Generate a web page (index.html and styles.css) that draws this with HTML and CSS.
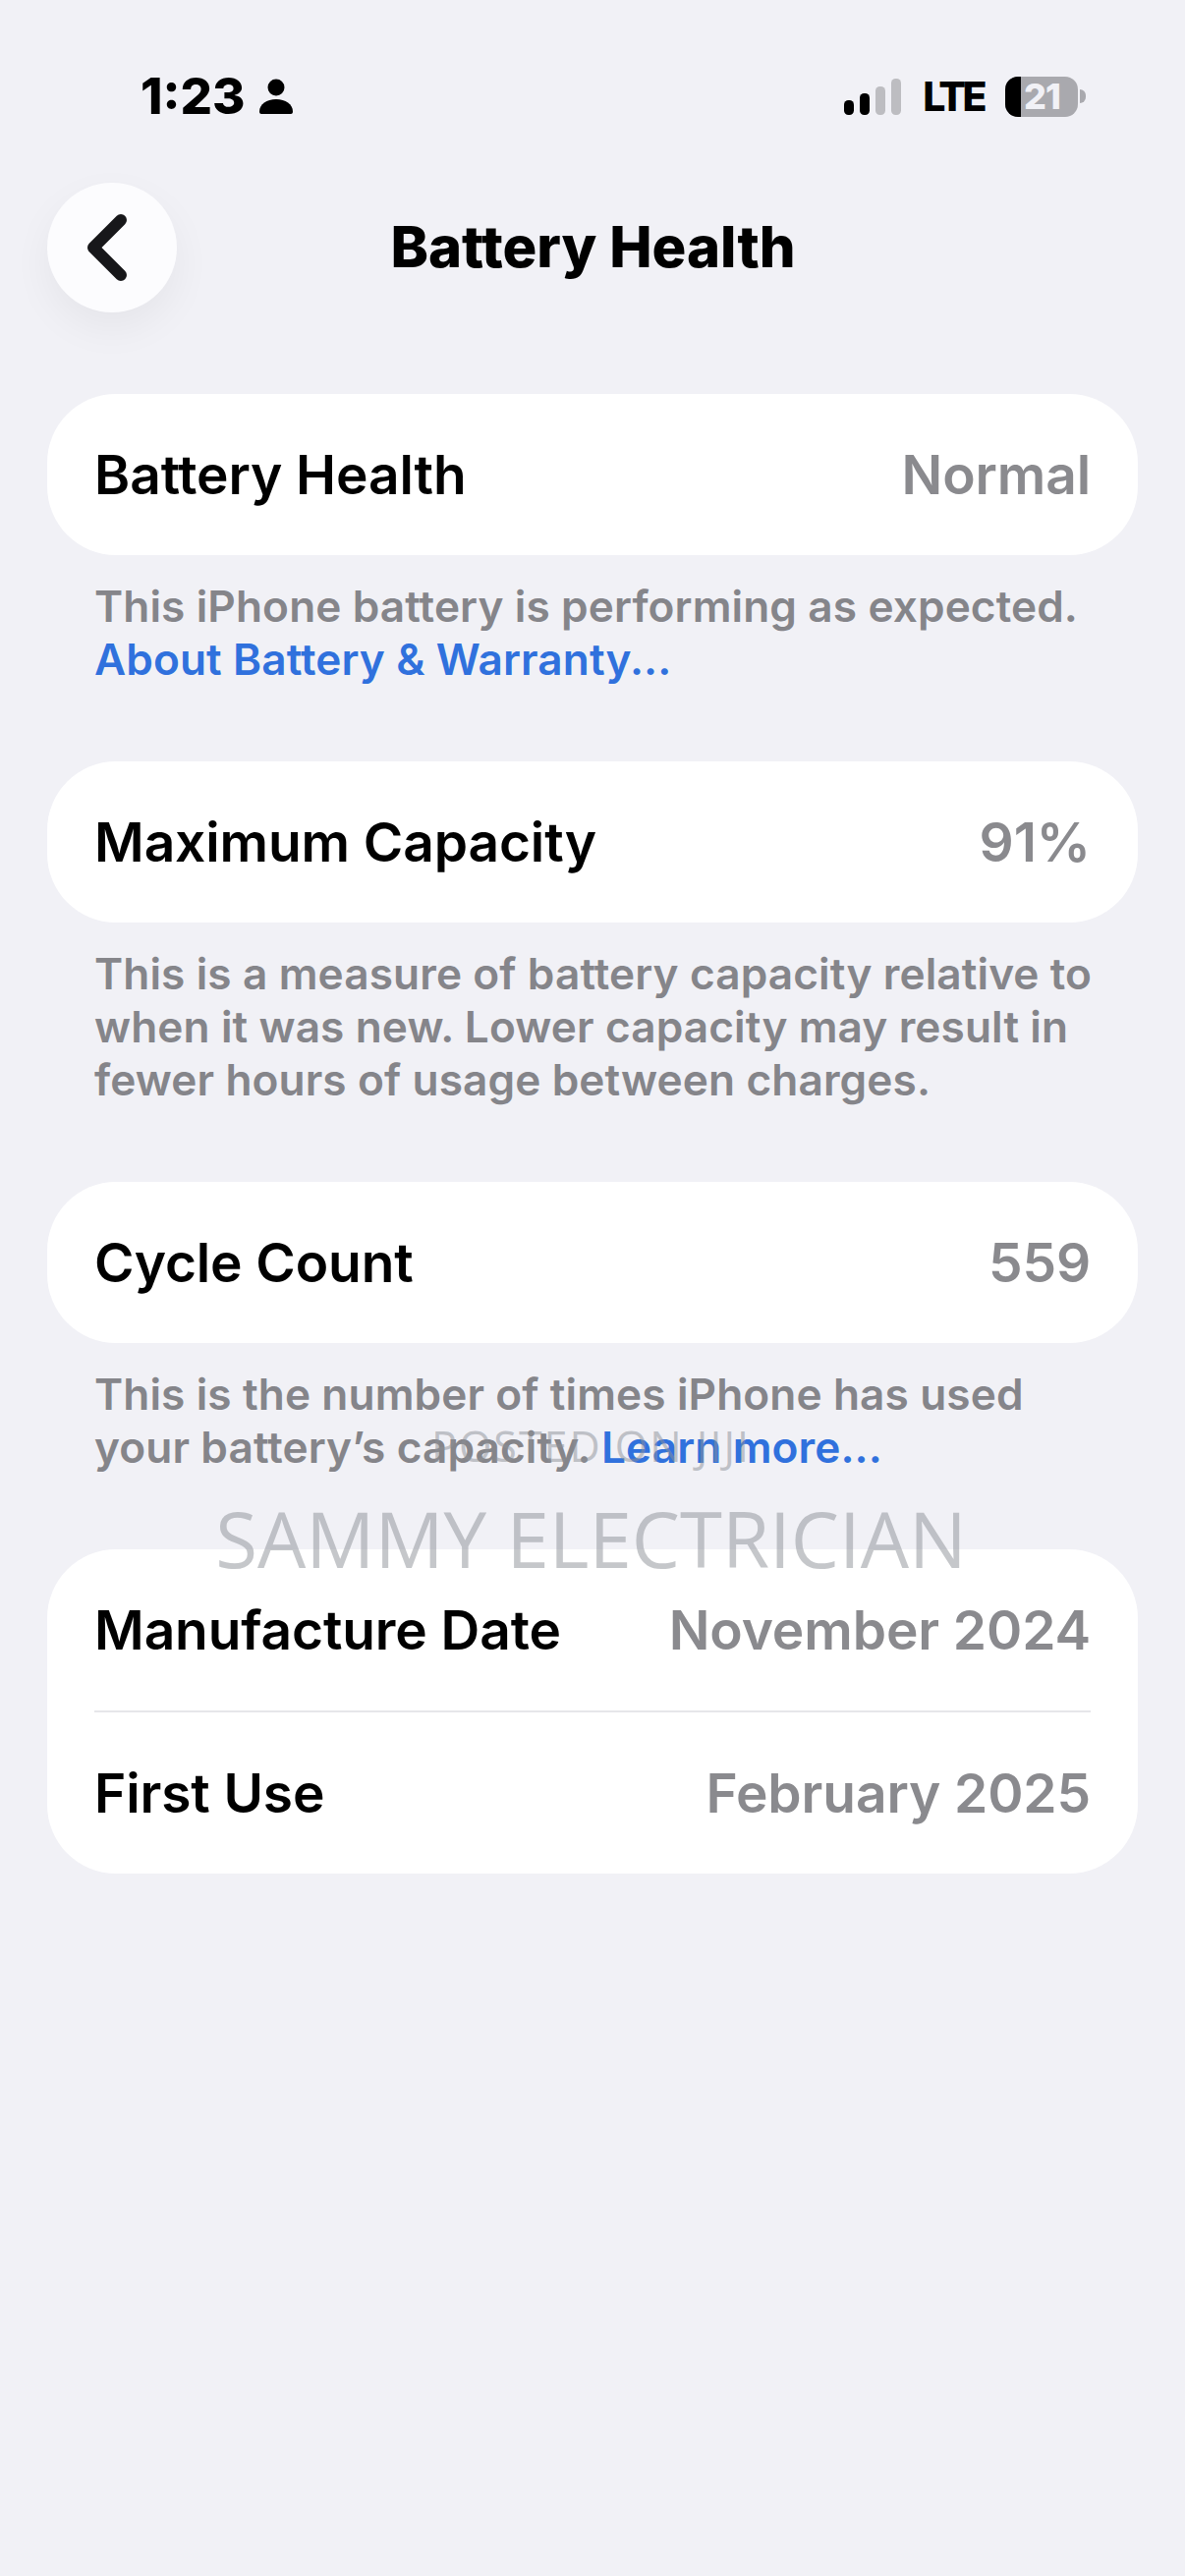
FILE: index.html
```html
<!DOCTYPE html>
<html lang="en">
<head>
    <meta charset="UTF-8">
    <title>Battery Health</title>
    <link rel="stylesheet" href="styles.css">
</head>
<body>

<div class="screen">
    <div class="status-bar">
        <div class="status-left">
            <span class="time">1:23</span>
            <svg class="person" width="34" height="36" viewBox="0 0 34 36">
                <circle cx="17" cy="9" r="8.500"/>
                <path d="M2 36c-1.500 0-2-1-2-2.500C0 26 7.500 21 17 21s17 5 17 12.500c0 1.500-.5 2.500-2 2.500z"/>
            </svg>
        </div>
        <div class="status-right">
            <svg class="signal" width="58" height="37" viewBox="0 0 58 37">
                <rect x="0" y="22" width="10" height="15" rx="4.500" fill="#000"/>
                <rect x="16" y="15" width="10" height="22" rx="4.500" fill="#000"/>
                <rect x="32" y="8" width="10" height="29" rx="4.500" fill="#bdbdc1"/>
                <rect x="48" y="0" width="10" height="37" rx="4.500" fill="#bdbdc1"/>
            </svg>
            <span class="lte">LTE</span>
            <div class="battery">
                <div class="battery-body">
                    <div class="battery-fill"></div>
                    <span class="battery-num">21</span>
                </div>
                <div class="battery-cap"></div>
            </div>
        </div>
    </div>

    <div class="nav">
        <div class="back">
            <svg width="42" height="68" viewBox="0 0 42 68">
                <path d="M35 6 7 34l28 28" fill="none" stroke="#17171a" stroke-width="12" stroke-linecap="round" stroke-linejoin="round"/>
            </svg>
        </div>
        <h1 class="title">Battery Health</h1>
    </div>

    <div class="group">
        <div class="card">
            <div class="row"><span>Battery Health</span><span class="value">Normal</span></div>
        </div>
        <p class="note">This iPhone battery is performing as expected.<br><a class="link">About Battery &amp; Warranty...</a></p>
    </div>

    <div class="group">
        <div class="card">
            <div class="row"><span>Maximum Capacity</span><span class="value">91%</span></div>
        </div>
        <p class="note">This is a measure of battery capacity relative to<br>when it was new. Lower capacity may result in<br>fewer hours of usage between charges.</p>
    </div>

    <div class="group">
        <div class="card">
            <div class="row"><span>Cycle Count</span><span class="value">559</span></div>
        </div>
        <p class="note">This is the number of times iPhone has used<br>your battery’s capacity. <a class="link">Learn more...</a></p>
    </div>

    <div class="group">
        <div class="card">
            <div class="row"><span>Manufacture Date</span><span class="value">November 2024</span></div>
            <div class="divider"></div>
            <div class="row"><span>First Use</span><span class="value">February 2025</span></div>
        </div>
    </div>

    <div class="watermark">
        <div class="wm-small">POSTED ON JIJI</div>
        <div class="wm-big">SAMMY ELECTRICIAN</div>
    </div>
</div>

</body>
</html>
```

FILE: styles.css
```css
* {
    box-sizing: border-box;
}
body {
    margin: 0;
    background-color: #f1f1f6;
    font-family: Inter, "Liberation Sans", sans-serif;
    color: #000;
}
.screen {
    position: relative;
    width: 1206px;
    height: 2622px;
    padding: 0 48px;
    overflow: hidden;
}
.status-bar {
    display: flex;
    justify-content: space-between;
    align-items: center;
    height: 154px;
    padding: 42px 53px 0 95px;
}
.status-left {
    display: flex;
    align-items: center;
    gap: 14px;
}
.time {
    font-size: 51px;
    font-weight: 800;
    line-height: 50px;
}
.status-right {
    display: flex;
    align-items: center;
    gap: 22px;
}
.lte {
    font-size: 41px;
    font-weight: 800;
    line-height: 40px;
    letter-spacing: -3.500px;
}
.battery {
    display: flex;
    align-items: center;
    gap: 2px;
}
.battery-body {
    position: relative;
    width: 74px;
    height: 41px;
    border-radius: 13px;
    background-color: #a9a9ae;
}
.battery-fill {
    width: 16px;
    height: 100%;
    border-radius: 13px 0 0 13px;
    background-color: #000;
}
.battery-num {
    position: absolute;
    top: 0;
    left: 19px;
    font-size: 36px;
    line-height: 41px;
    font-weight: 800;
    letter-spacing: -1px;
    color: #f1f1f6;
}
.battery-cap {
    width: 6px;
    height: 14px;
    border-radius: 0 6px 6px 0;
    background-color: #a9a9ae;
}
.nav {
    position: relative;
    display: flex;
    justify-content: center;
    align-items: center;
    height: 132px;
    margin-top: 32px;
}
.back {
    position: absolute;
    left: 0;
    top: 0;
    width: 132px;
    height: 132px;
    border-radius: 50%;
    background-color: #fcfcfe;
    box-shadow: 0 16px 40px rgba(0, 0, 0, 0.05);
    display: flex;
    justify-content: center;
    align-items: center;
    padding-right: 10px;
}
.title {
    margin: 0 0 0 1px;
    font-size: 58px;
    line-height: 66px;
    font-weight: 800;
    position: relative;
    top: -1px;
}
.group {
    margin-top: 83px;
}
.group + .group {
    margin-top: 77px;
}
.card {
    background-color: #fff;
    border-radius: 70px;
    padding: 0 48px;
}
.row {
    display: flex;
    justify-content: space-between;
    align-items: center;
    height: 164px;
    font-size: 55px;
    font-weight: 570;
    letter-spacing: -0.1px;
}
.value {
    color: #8a8a8e;
}
.divider {
    height: 2px;
    background-color: #e6e6ea;
}
.note {
    margin: 25px 0 0;
    padding: 0 48px;
    font-size: 44.200px;
    line-height: 54px;
    font-weight: 570;
    letter-spacing: 0.1px;
    white-space: nowrap;
    color: #85858a;
}
.link {
    color: #3071dd;
}
.watermark {
    position: absolute;
    left: 0;
    top: 1447px;
    width: 100%;
    padding-right: 3px;
    text-align: center;
    font-family: "Open Sans", sans-serif;
    color: rgba(140, 144, 150, 0.5);
}
.wm-small {
    font-size: 43px;
    line-height: 50px;
    letter-spacing: 2px;
}
.wm-big {
    font-size: 78px;
    line-height: 100px;
    margin-top: 19px;
}
```
